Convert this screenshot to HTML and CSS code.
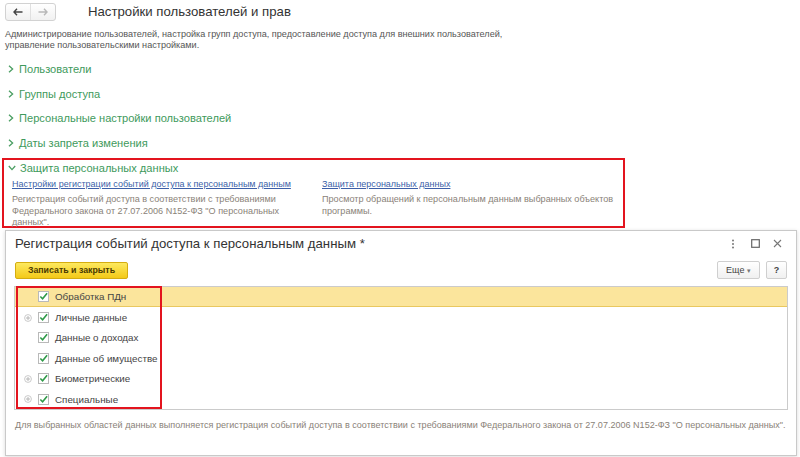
FILE: index.html
```html
<!DOCTYPE html>
<html lang="ru">
<head>
<meta charset="utf-8">
<title>Настройки пользователей и прав</title>
<link rel="stylesheet" href="styles.css">
</head>
<body>
<div class="page">
  <div class="top">
    <div class="nav">
      <span class="navbtn">
        <svg width="10" height="8" viewBox="0 0 10 8"><path d="M1 4H9.5M4 0.8L1 4L4 7.2" fill="none" stroke="#444" stroke-width="1.4"/></svg>
      </span>
      <span class="navbtn">
        <svg width="10" height="8" viewBox="0 0 10 8"><path d="M0.5 4H9M6 0.8L9 4L6 7.2" fill="none" stroke="#b8b8b8" stroke-width="1.4"/></svg>
      </span>
    </div>
    <h1 class="title">Настройки пользователей и прав</h1>
  </div>
  <p class="desc">Администрирование пользователей, настройка групп доступа, предоставление доступа для внешних пользователей,<br>управление пользовательскими настройками.</p>

  <div class="groups">
    <div class="group"><svg class="chev" width="6" height="8" viewBox="0 0 6 8"><path d="M1 0.8L4.6 4L1 7.2" fill="none" stroke="#4a9e62" stroke-width="1.3"/></svg>Пользователи</div>
    <div class="group"><svg class="chev" width="6" height="8" viewBox="0 0 6 8"><path d="M1 0.8L4.6 4L1 7.2" fill="none" stroke="#4a9e62" stroke-width="1.3"/></svg>Группы доступа</div>
    <div class="group"><svg class="chev" width="6" height="8" viewBox="0 0 6 8"><path d="M1 0.8L4.6 4L1 7.2" fill="none" stroke="#4a9e62" stroke-width="1.3"/></svg>Персональные настройки пользователей</div>
    <div class="group"><svg class="chev" width="6" height="8" viewBox="0 0 6 8"><path d="M1 0.8L4.6 4L1 7.2" fill="none" stroke="#4a9e62" stroke-width="1.3"/></svg>Даты запрета изменения</div>
  </div>

  <div class="open-group">
    <div class="group group-open"><svg class="chev-down" width="8" height="6" viewBox="0 0 8 6"><path d="M0.8 1L4 4.6L7.2 1" fill="none" stroke="#4a9e62" stroke-width="1.3"/></svg>Защита персональных данных</div>
    <div class="cols">
      <div class="col col-left">
        <a class="link" href="#">Настройки регистрации событий доступа к персональным данным</a>
        <p class="note">Регистрация событий доступа в соответствии с требованиями Федерального закона от 27.07.2006 N152-ФЗ "О персональных данных".</p>
      </div>
      <div class="col col-right">
        <a class="link" href="#">Защита персональных данных</a>
        <p class="note">Просмотр обращений к персональным данным выбранных объектов программы.</p>
      </div>
    </div>
  </div>
</div>

<div class="dialog">
  <div class="dlg-head">
    <div class="dlg-title">Регистрация событий доступа к персональным данным *</div>
    <div class="dlg-icons">
      <svg width="4" height="10" viewBox="0 0 4 10"><circle cx="2" cy="1.5" r="1" fill="#777"/><circle cx="2" cy="5" r="1" fill="#777"/><circle cx="2" cy="8.5" r="1" fill="#777"/></svg>
      <svg width="9" height="9" viewBox="0 0 9 9"><rect x="0.7" y="0.7" width="7.6" height="7.6" fill="none" stroke="#666" stroke-width="1.2"/></svg>
      <svg width="9" height="9" viewBox="0 0 9 9"><path d="M1 1L8 8M8 1L1 8" stroke="#777" stroke-width="1.1"/></svg>
    </div>
  </div>
  <div class="toolbar">
    <button class="btn-main">Записать и закрыть</button>
    <div class="tool-right">
      <button class="btn btn-more">Еще <span class="caret">▾</span></button>
      <button class="btn btn-q">?</button>
    </div>
  </div>
  <div class="tree">
    <div class="row row-sel"><span class="exp"></span><span class="cb"><svg width="10" height="9" viewBox="0 0 10 9"><path d="M1.5 4.5L4 7L9 1" fill="none" stroke="#2f9a48" stroke-width="1.8"/></svg></span>Обработка ПДн</div>
    <div class="row"><span class="exp"><svg width="8" height="8" viewBox="0 0 8 8"><circle cx="4" cy="4" r="3.4" fill="none" stroke="#c4c4c4" stroke-width="0.9"/><path d="M2 4H6M4 2V6" stroke="#b0b0b0" stroke-width="0.9"/></svg></span><span class="cb"><svg width="10" height="9" viewBox="0 0 10 9"><path d="M1.5 4.5L4 7L9 1" fill="none" stroke="#2f9a48" stroke-width="1.8"/></svg></span>Личные данные</div>
    <div class="row"><span class="exp"></span><span class="cb"><svg width="10" height="9" viewBox="0 0 10 9"><path d="M1.5 4.5L4 7L9 1" fill="none" stroke="#2f9a48" stroke-width="1.8"/></svg></span>Данные о доходах</div>
    <div class="row"><span class="exp"></span><span class="cb"><svg width="10" height="9" viewBox="0 0 10 9"><path d="M1.5 4.5L4 7L9 1" fill="none" stroke="#2f9a48" stroke-width="1.8"/></svg></span>Данные об имуществе</div>
    <div class="row"><span class="exp"><svg width="8" height="8" viewBox="0 0 8 8"><circle cx="4" cy="4" r="3.4" fill="none" stroke="#c4c4c4" stroke-width="0.9"/><path d="M2 4H6M4 2V6" stroke="#b0b0b0" stroke-width="0.9"/></svg></span><span class="cb"><svg width="10" height="9" viewBox="0 0 10 9"><path d="M1.5 4.5L4 7L9 1" fill="none" stroke="#2f9a48" stroke-width="1.8"/></svg></span>Биометрические</div>
    <div class="row"><span class="exp"><svg width="8" height="8" viewBox="0 0 8 8"><circle cx="4" cy="4" r="3.4" fill="none" stroke="#c4c4c4" stroke-width="0.9"/><path d="M2 4H6M4 2V6" stroke="#b0b0b0" stroke-width="0.9"/></svg></span><span class="cb"><svg width="10" height="9" viewBox="0 0 10 9"><path d="M1.5 4.5L4 7L9 1" fill="none" stroke="#2f9a48" stroke-width="1.8"/></svg></span>Специальные</div>
    <div class="mark"></div>
  </div>
  <p class="footer-note">Для выбранных областей данных выполняется регистрация событий доступа в соответствии с требованиями Федерального закона от 27.07.2006 N152-ФЗ "О персональных данных".</p>
</div>
</body>
</html>
```
FILE: styles.css
```css
* { box-sizing: border-box; }
html, body { margin: 0; padding: 0; background: #fff; }
body {
  font-family: "Liberation Sans", Arial, sans-serif;
  color: #333;
  width: 800px;
  height: 457px;
  overflow: hidden;
  position: relative;
}
.page { padding: 3px 0 0 0; }
.top { display: flex; align-items: center; height: 18px; padding-left: 5px; }
.nav {
  display: flex;
  width: 51px;
  height: 18px;
  border: 1px solid #d2d2d2;
  border-radius: 3px;
  background: linear-gradient(#fff, #f1f1f1);
}
.navbtn { flex: 1; display: flex; align-items: center; justify-content: center; }
.navbtn + .navbtn { border-left: 1px solid #e0e0e0; }
.title {
  margin: 0 0 0 32px;
  font-size: 13.2px;
  font-weight: normal;
  color: #333;
  line-height: 18px;
}
.desc {
  margin: 8px 0 0 5px;
  font-size: 9.1px;
  line-height: 11px;
  color: #555;
}
.groups { margin-top: 6px; }
.group {
  display: flex;
  align-items: center;
  height: 24.5px;
  padding-left: 8px;
  font-size: 11.1px;
  color: #3e9a5c;
}
.chev { margin-right: 5px; }
.chev-down { margin-right: 4px; }
.open-group {
  margin: 3px 0 0 2px;
  width: 623px;
  height: 70px;
  border: 2px solid #e3141e;
  padding: 0;
}
.group-open { height: 16px; padding-left: 4px; margin-top: 0; }
.cols { display: flex; padding-left: 8px; margin-top: 1px; }
.col-left { width: 310px; }
.col-right { width: 300px; }
.link {
  display: block;
  font-size: 9px;
  line-height: 15px;
  color: #3d5fa8;
  text-decoration: underline;
}
.note {
  margin: 2px 0 0 0;
  font-size: 9.1px;
  line-height: 11.5px;
  color: #8a8278;
}
.col-left .note { width: 290px; }

.dialog {
  position: absolute;
  left: 5px;
  top: 230px;
  width: 792px;
  height: 226px;
  background: #fff;
  border: 1px solid #c9c9c9;
  box-shadow: 0 1px 4px rgba(0,0,0,0.15);
  padding: 0 8px 0 8px;
}
.dlg-head { display: flex; align-items: center; height: 25px; padding-left: 1px; }
.dlg-title { flex: 1; font-size: 13.2px; color: #333; }
.dlg-icons { display: flex; align-items: center; gap: 13px; padding-right: 6px; }
.dlg-icons svg:first-child { margin-right: 3px; }
.toolbar { display: flex; align-items: center; height: 18px; margin-top: 5px; }
.btn-main {
  height: 17px;
  width: 113px;
  padding: 0;
  font-family: inherit;
  font-size: 8.8px;
  font-weight: bold;
  color: #4a3a00;
  background: linear-gradient(#fde95f, #f3c918);
  border: 1px solid #d5ad10;
  border-radius: 2px;
  margin-left: 1px;
}
.tool-right { margin-left: auto; display: flex; gap: 6px; padding-right: 1px; }
.btn {
  height: 18px;
  padding: 0 6px;
  font-family: inherit;
  font-size: 9px;
  color: #444;
  background: linear-gradient(#fff, #f0f0f0);
  border: 1px solid #cfcfcf;
  border-radius: 2px;
}
.btn-more { width: 43px; }
.caret { font-size: 7px; color: #777; }
.btn-q { width: 21px; padding: 0; font-weight: bold; color: #444; }
.tree {
  position: relative;
  margin-top: 7px;
  height: 124px;
  border: 1px solid #cbcbcb;
}
.row {
  display: flex;
  align-items: center;
  height: 20.4px;
  font-size: 9.8px;
  color: #444;
  padding-left: 9px;
}
.row-sel { background: #fbe59c; border-bottom: 1px solid #e9c860; }
.exp { width: 10px; height: 8px; margin-right: 4px; display: flex; }
.cb {
  width: 11px; height: 11px;
  border: 1px solid #b9b9b9;
  background: #fff;
  margin-right: 6px;
  display: flex; align-items: center; justify-content: center;
}
.mark {
  position: absolute;
  left: 1px;
  top: -1px;
  width: 146px;
  height: 123px;
  border: 2px solid #e3141e;
}
.footer-note {
  margin: 10px 0 0 1px;
  font-size: 9.05px;
  color: #8a8278;
}
```
